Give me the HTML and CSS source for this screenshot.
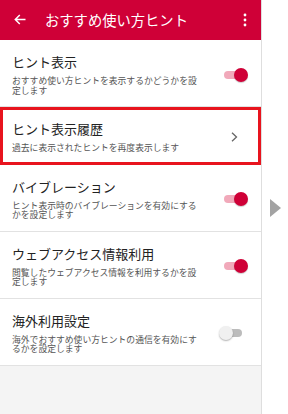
FILE: index.html
```html
<!DOCTYPE html>
<html lang="ja">
<head>
<meta charset="utf-8">
<link rel="stylesheet" href="styles.css">
</head>
<body>
<div class="screen">
  <header class="appbar">
    <svg class="back" width="12" height="11" viewBox="0 0 12 11"><path d="M11.5 5.5H1.5M5.8 1L1.3 5.5L5.8 10" fill="none" stroke="#fff" stroke-width="1.5"/></svg>
    <div class="appbar-title">おすすめ使い方ヒント</div>
    <svg class="kebab" width="4" height="14" viewBox="0 0 4 14"><circle cx="2" cy="2" r="1.4" fill="#fff"/><circle cx="2" cy="7" r="1.4" fill="#fff"/><circle cx="2" cy="12" r="1.4" fill="#fff"/></svg>
  </header>
  <div class="list">
    <div class="item">
      <div class="text">
        <div class="title">ヒント表示</div>
        <div class="sub">おすすめ使い方ヒントを表示するかどうかを設定します</div>
      </div>
      <div class="control"><div class="switch on"><span class="track"></span><span class="thumb"></span></div></div>
    </div>
    <div class="item highlight">
      <div class="text">
        <div class="title">ヒント表示履歴</div>
        <div class="sub">過去に表示されたヒントを再度表示します</div>
      </div>
      <div class="control"><svg class="chev" width="7" height="10" viewBox="0 0 7 10"><path d="M1 0.8L5.5 5L1 9.2" fill="none" stroke="#666" stroke-width="1.3"/></svg></div>
    </div>
    <div class="item">
      <div class="text">
        <div class="title">バイブレーション</div>
        <div class="sub">ヒント表示時のバイブレーションを有効にするかを設定します</div>
      </div>
      <div class="control"><div class="switch on"><span class="track"></span><span class="thumb"></span></div></div>
    </div>
    <div class="item">
      <div class="text">
        <div class="title">ウェブアクセス情報利用</div>
        <div class="sub">閲覧したウェブアクセス情報を利用するかを設定します</div>
      </div>
      <div class="control"><div class="switch on"><span class="track"></span><span class="thumb"></span></div></div>
    </div>
    <div class="item">
      <div class="text">
        <div class="title">海外利用設定</div>
        <div class="sub">海外でおすすめ使い方ヒントの通信を有効にするかを設定します</div>
      </div>
      <div class="control"><div class="switch off"><span class="track"></span><span class="thumb"></span></div></div>
    </div>
  </div>
</div>
<div class="side"><div class="next"></div></div>
</body>
</html>
```

FILE: styles.css
```css
html, body {
  margin: 0;
  padding: 0;
}
body {
  width: 288px;
  height: 414px;
  display: flex;
  background: #fff;
  font-family: "Noto Sans CJK JP", "Noto Sans", sans-serif;
  overflow: hidden;
}
.screen {
  width: 261px;
  height: 414px;
  border-right: 1px solid #dedede;
  background: #f4f4f4;
  display: flex;
  flex-direction: column;
}
.appbar {
  height: 40px;
  background: #cf0037;
  display: flex;
  align-items: center;
  flex-shrink: 0;
}
.back {
  margin-left: 14px;
  margin-top: -1px;
}
.appbar-title {
  margin-left: 19px;
  color: #fff;
  font-size: 14.3px;
  line-height: 18px;
  flex: 1;
  margin-top: -1px;
}
.kebab {
  margin-right: 14px;
  margin-top: -1px;
}
.list {
  background: #fff;
}
.item {
  display: flex;
  align-items: center;
  padding: 14px 0 11px 12px;
  border-bottom: 1px solid #e2e2e2;
}
.item.highlight {
  outline: 3px solid #e8141e;
  outline-offset: -3px;
  position: relative;
}
.text {
  width: 189px;
}
.title {
  font-size: 13px;
  line-height: 16px;
  color: #222;
}
.sub {
  margin-top: 6px;
  font-size: 8.8px;
  line-height: 9.5px;
  color: #555;
}
.control {
  margin-left: auto;
  margin-right: 13px;
  width: 29px;
  display: flex;
  justify-content: center;
  align-items: center;
}
.chev {
  margin-left: 1px;
}
.switch {
  position: relative;
  width: 29px;
  height: 14px;
}
.track {
  position: absolute;
  left: 5px;
  right: 6px;
  top: 3px;
  height: 8px;
  border-radius: 4px;
}
.thumb {
  position: absolute;
  top: 0;
  width: 14px;
  height: 14px;
  border-radius: 50%;
}
.switch.on .track { background: #f1a9ba; }
.switch.on .thumb { right: 0; background: #cf0037; box-shadow: 0 1px 1px rgba(0,0,0,0.2); }
.switch.off .track { background: #bcbcbc; }
.switch.off .thumb { left: 0; background: #f0f0f0; box-shadow: 0 1px 1.5px rgba(0,0,0,0.3); }
.side {
  flex: 1;
  display: flex;
  align-items: center;
}
.next {
  margin-left: 8px;
  margin-top: 1px;
  width: 0;
  height: 0;
  border-left: 11px solid #a3a3a3;
  border-top: 9.5px solid transparent;
  border-bottom: 9.5px solid transparent;
}
```
